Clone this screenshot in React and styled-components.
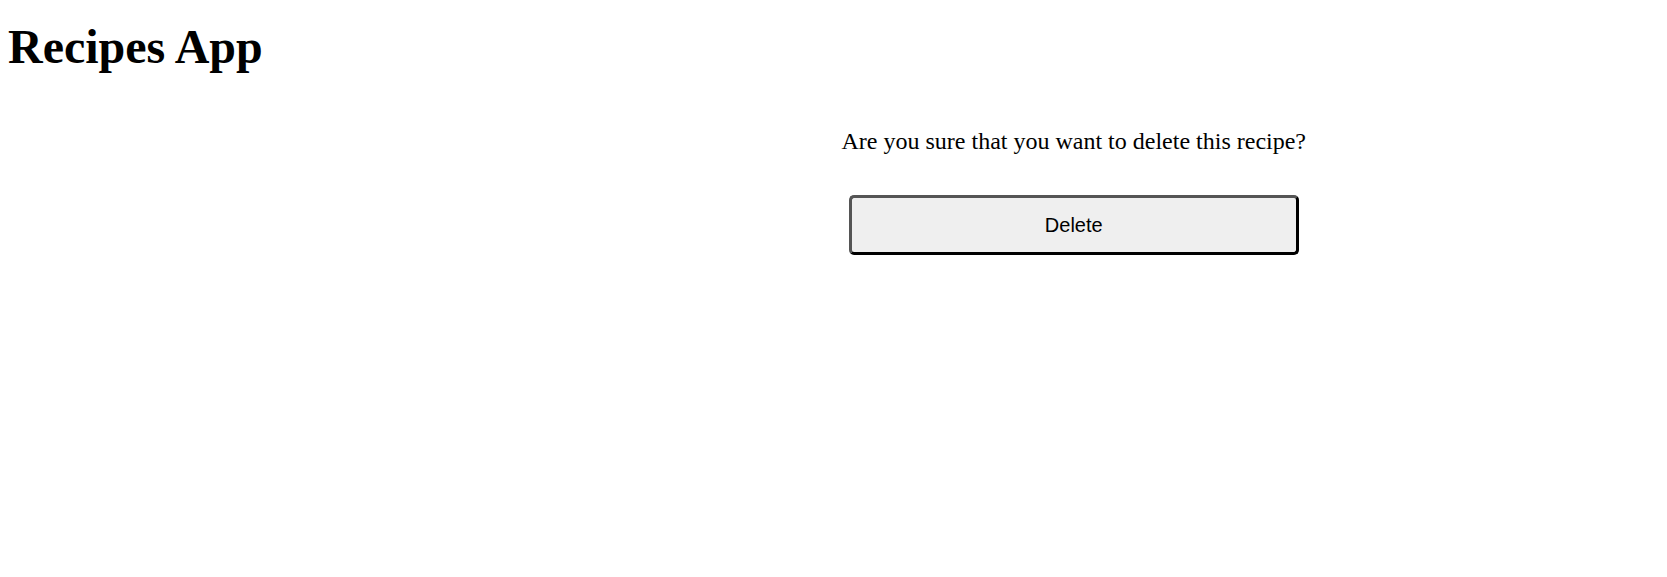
import React from 'react';
import styled, { createGlobalStyle } from 'styled-components';

const GlobalStyle = createGlobalStyle`
    body {
        margin: 8px;
        font-family: "Liberation Serif", "Times New Roman", serif;
        background: white;
        color: black;
    }
`;

const Title = styled.h1`
    font-size: 48px;
    font-weight: bold;
    margin: 0;
    padding-top: 12px;
    line-height: 54px;
`;

const Layout = styled.div`
    display: grid;
    grid-template-columns: 1fr 1fr;
    margin-top: 54px;
`;

const Confirm = styled.div`
    display: flex;
    flex-direction: column;
    align-items: center;
    width: fit-content;
    padding-left: 8px;
`;

const Question = styled.p`
    font-size: 24px;
    margin: 0 0 40px;
`;

const DeleteButton = styled.button`
    width: 450px;
    height: 60px;
    font-family: "Liberation Sans", Arial, sans-serif;
    font-size: 20px;
    color: black;
    background: #efefef;
    border: 3px solid #000;
    border-top-color: #555;
    border-left-color: #555;
    border-radius: 5px;
`;

const App = () => {
    return (
        <>
            <GlobalStyle />
            <Title>Recipes App</Title>
            <Layout>
                <div />
                <Confirm>
                    <Question>Are you sure that you want to delete this recipe?</Question>
                    <DeleteButton>Delete</DeleteButton>
                </Confirm>
            </Layout>
        </>
    );
};

export default App;
